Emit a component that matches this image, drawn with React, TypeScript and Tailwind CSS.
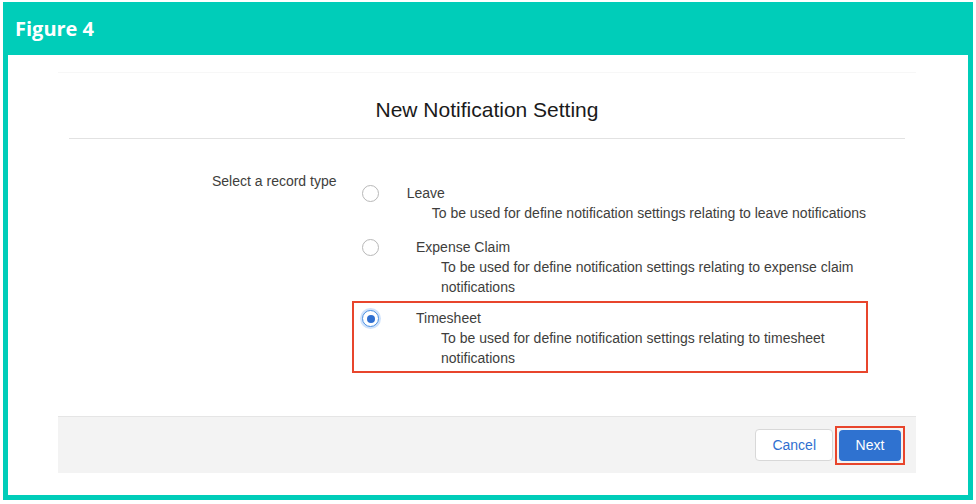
import React from 'react';

const options = [
  { label: 'Leave', desc: ['To be used for define notification settings relating to leave notifications'], checked: false, h: 'h-[54px]' },
  { label: 'Expense Claim', desc: ['To be used for define notification settings relating to expense claim', 'notifications'], checked: false, h: 'h-[66px]' },
  { label: 'Timesheet', desc: ['To be used for define notification settings relating to timesheet', 'notifications'], checked: true, h: 'h-[72px]' },
];

const Radio: React.FC<{ checked: boolean }> = ({ checked }) => (
  <span
    className={`w-[17px] h-[17px] rounded-full border flex items-center justify-center bg-white ${
      checked ? 'border-[#4a90e2] shadow-[0_0_0_2px_#cfe2fb]' : 'border-[#b8b8b8]'
    }`}
  >
    {checked && <span className="w-[8px] h-[8px] rounded-full bg-[#2f6fd0]" />}
  </span>
);

export default function App() {
  return (
    <div className="w-[976px] h-[504px] bg-white" style={{ fontFamily: '"Liberation Sans", Arial, sans-serif' }}>
      <div className="mx-[3px] mt-[2px] h-[498px] bg-[#00cdb9] pt-0 px-[5px] pb-[5px] flex flex-col">
        <div className="h-[53px] flex items-center pl-[7px] text-white text-[20px] font-bold" style={{ fontFamily: '"Open Sans", Lato, sans-serif' }}>
          Figure 4
        </div>
        <div className="flex-1 bg-white pl-[50px] pr-[52px] pt-[17px]">
          <div className="h-[1px] w-full bg-[#f7f7f7]" />
          <div className="h-[66px] flex items-center justify-center pt-[8px] text-[21px] text-[#1a1a1a] mx-[11px] border-b border-[#e2e2e2]">
            New Notification Setting
          </div>
          <div className="flex pt-[30px] h-[277px] text-[14px] text-[#3e3e3c]">
            <div className="w-[294px] pt-[2px] pl-[154px] whitespace-nowrap">
              Select a record type
            </div>
            <div className="flex flex-col pt-[12px]">
              {options.map((o) => (
                <div
                  key={o.label}
                  className={`flex w-[516px] border-2 ${o.h} ${o.checked ? 'border-[#e8452c] pt-[5px]' : 'border-transparent'}`}
                >
                  <div className="w-[62px] pl-[8px] pt-[2px]">
                    <Radio checked={o.checked} />
                  </div>
                  <div className="leading-[20px]">
                    <div>{o.label}</div>
                    {o.desc.map((d) => (
                      <div key={d} className="pl-[25px] whitespace-nowrap">{d}</div>
                    ))}
                  </div>
                </div>
              ))}
            </div>
          </div>
          <div className="h-[57px] bg-[#f3f3f3] border-t border-[#e5e5e5] flex items-center justify-end pr-[11px] gap-[2px]">
            <button className="h-[32px] px-[16px] bg-white border border-[#d8d8d8] rounded-[4px] text-[#2f6fd0] text-[14px]">Cancel</button>
            <div className="border-2 border-[#e8452c] p-[2px]">
              <button className="h-[31px] w-[62px] bg-[#2f72d0] rounded-[4px] text-white text-[14px]">Next</button>
            </div>
          </div>
        </div>
      </div>
    </div>
  );
}
